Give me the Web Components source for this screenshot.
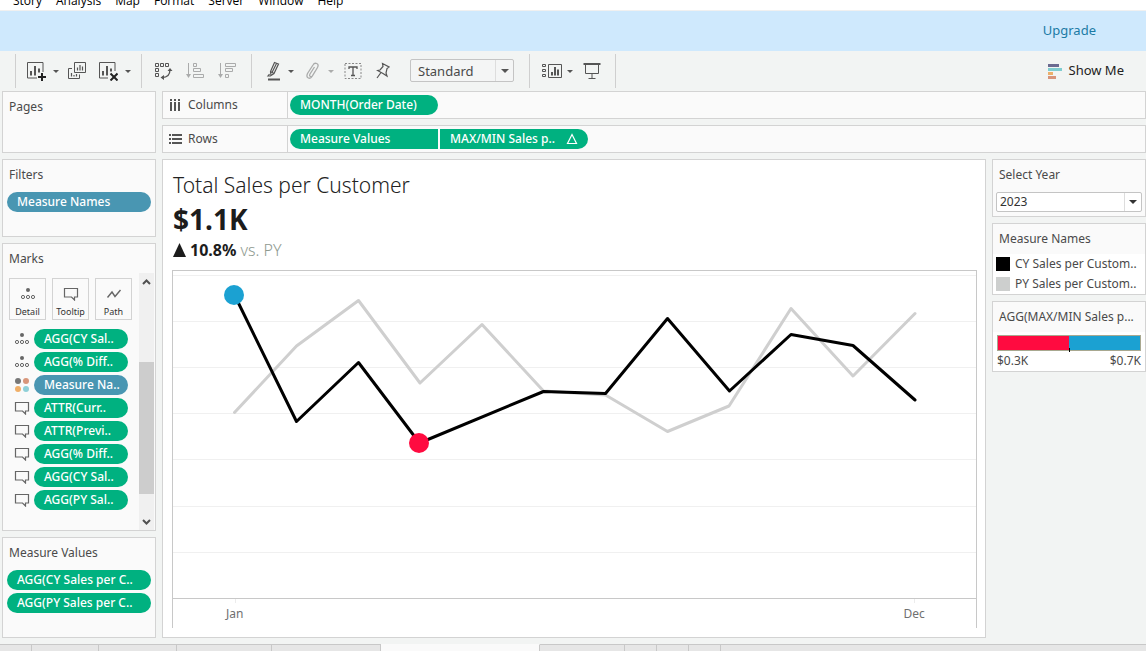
<!DOCTYPE html>
<html lang="en">
<head>
<meta charset="utf-8">
<title>Total Sales per Customer</title>
<style>
html,body{margin:0;height:100%}
body{font-family:"Noto Sans","Open Sans",sans-serif;font-size:12px;line-height:20px;color:#4a4a4a;background:#f2f4f3;overflow:hidden;
--line:#d3d3d3;--panel:#fafafa;--green:#00b180;--blue:#4996b2}
</style>
</head>
<body>
<workbook-app></workbook-app>

<template id="t-app">
<style>
:host{display:flex;flex-direction:column;min-height:100vh}
main{flex:1;display:grid;grid-template-columns:154px minmax(0,1fr);gap:6px;padding:0 0 6px 2px}
aside,.work,.legends{display:flex;flex-direction:column;gap:6px;min-width:0}
.row{flex:1;display:grid;grid-template-columns:minmax(0,1fr) 154px;gap:6px}
.pages{height:62px}.filters{height:78px}.marks{height:288px}.values{flex:1}
.stack{display:grid;gap:3px;padding:0 4px}
</style>
<menu-bar></menu-bar>
<upgrade-banner></upgrade-banner>
<tool-bar></tool-bar>
<main>
<aside>
<side-card class="pages" heading="Pages"></side-card>
<side-card class="filters" heading="Filters"><div class="stack"><field-pill kind="dimension">Measure Names</field-pill></div></side-card>
<side-card class="marks" heading="Marks"><marks-list></marks-list></side-card>
<side-card class="values" heading="Measure Values"><div class="stack"><field-pill>AGG(CY Sales per C..</field-pill><field-pill>AGG(PY Sales per C..</field-pill></div></side-card>
</aside>
<div class="work">
<data-shelf name="Columns" icon="columns"><field-pill size="shelf">MONTH(Order Date)</field-pill></data-shelf>
<data-shelf name="Rows" icon="rows"><field-pill size="shelf" join="right">Measure Values</field-pill><field-pill size="shelf" join="left" calc>MAX/MIN Sales p..</field-pill></data-shelf>
<div class="row">
<chart-view></chart-view>
<div class="legends">
<year-filter></year-filter>
<name-legend></name-legend>
<range-legend></range-legend>
</div>
</div>
</div>
</main>
<sheet-tabs></sheet-tabs>
</template>

<template id="t-menu">
<style>
:host{display:block;height:10px;background:#fff;border-bottom:1px solid #f0f0f0;overflow:hidden}
nav{display:flex;gap:14px;padding-left:13px;height:9px;align-items:flex-end}
button{all:unset;font:12px/16px "Open Sans","Noto Sans",sans-serif;color:#000;white-space:nowrap}
</style>
<nav><button>Story</button><button>Analysis</button><button>Map</button><button>Format</button><button>Server</button><button>Window</button><button>Help</button></nav>
</template>

<template id="t-banner">
<style>
:host{display:flex;height:40px;background:#cfe9fd;align-items:flex-start;justify-content:flex-end;padding-right:50px;padding-top:9px;box-sizing:border-box}
a{font-size:13px;color:#1b7ba5;text-decoration:none}
</style>
<a href="#upgrade">Upgrade</a>
</template>

<template id="t-tools">
<style>
:host{display:flex;height:40px;align-items:center;padding-left:15px;padding-right:22px}
.g{display:flex;align-items:center;height:34px;border-left:1px solid #cfcfcf;box-sizing:border-box}
.g1{width:126px;padding-left:10px}.g2{width:110px;padding-left:11px}.g3{width:278px;padding-left:11px}.g4{width:86px;padding-left:11px}.g5{flex:1;justify-content:flex-end}
button{all:unset;display:flex;align-items:center}
svg{display:block;fill:none;stroke:#555;flex:none}
.dim{opacity:.45}
.arrow{width:0;height:0;border:3px solid transparent;border-top-color:#555;border-bottom:0}
.g1 .arrow{margin:0 9px 0 7px}
.g1 .arrow.last{margin-left:7px}
.g1 .clear{margin-left:12px}
.g2{gap:12px}
.g3 .arrow{margin:0 10px 0 6px}
.g3 .mark{margin-left:3px}
.g3 .arrow.dim{margin-left:8px}
.g3 .pin{margin-left:14px}
.g4 .arrow{margin:0 10px 0 4px}
.sel{position:relative;margin-left:20px;width:104px;height:23px;margin-top:-1px}
select{appearance:none;width:100%;height:100%;box-sizing:border-box;border:1px solid #c4c4c4;border-radius:2px;background:#f4f5f5;font:13px/20px "Noto Sans",sans-serif;color:#4a4a4a;padding:0 20px 0 7px}
.sel::before{content:"";position:absolute;right:18px;top:1px;bottom:1px;border-left:1px solid #ddd}
.sel::after{content:"";position:absolute;right:5px;top:10px;border:4px solid transparent;border-top-color:#555;border-bottom:0}
.show{font-size:13px;line-height:18px;color:#222;gap:6px}
.show svg{margin-top:1px}
.show span{margin-top:-2px}
</style>
<div class="g g1">
<button aria-label="New worksheet"><svg width="20" height="20" viewBox="0 0 20 20"><path d="M11 17H1.500V1.500H17V11"/><path d="M5 10v4.500M9 5v9.500M13 7.500v4" stroke-width="2"/><path d="M16 12v8M12 16h8" stroke="#222" stroke-width="2"/></svg></button><span class="arrow"></span>
<button aria-label="Duplicate"><svg width="18" height="18" viewBox="0 0 18 18"><path d="M6.500 .5h11v10h-11zM4 6.500H.5v10h11v-4"/><path d="M9.500 5.500v3M12 3v5.500M14.500 4.500v4M3.500 11v3.500M6 13v1.500M8.500 12v2.500" stroke-width="1.200"/></svg></button>
<button class="clear" aria-label="Clear sheet"><svg width="20" height="20" viewBox="0 0 20 20"><path d="M10 17H1.500V1.500H17V10"/><path d="M5 10v4.500M9 5v9.500M13 7.500v3" stroke-width="2"/><path d="M12.500 12.500l7 7M19.500 12.500l-7 7" stroke="#222" stroke-width="2"/></svg></button><span class="arrow last"></span>
</div>
<div class="g g2">
<button aria-label="Swap rows and columns"><svg width="20" height="20" viewBox="0 0 20 20"><path d="M2.500 2.500h3v3h-3zM7.500 2.500h3v3h-3zM12.500 2.500h3v3h-3zM2.500 7.500h3v3h-3zM2.500 12.500h3v3h-3z"/><path d="M17 8.500q0 8-8 8" stroke-width="1.300"/><path d="M14.500 10L17 7l2.500 3zM11 14l-3.500 2.500L11 19z" fill="#555" stroke="none"/></svg></button>
<button class="dim" aria-label="Sort ascending"><svg width="20" height="18" viewBox="0 0 20 18"><path d="M3.500 1v13M8.500 1.500h3v3h-3zM8.500 6.500h7v3h-7zM8.500 12.500h10v3h-10z"/><path d="M1 12h5l-2.500 4z" fill="#555" stroke="none"/></svg></button>
<button class="dim" aria-label="Sort descending"><svg width="20" height="18" viewBox="0 0 20 18"><path d="M3.500 1v13M8.500 1.500h10v3h-10zM8.500 6.500h7v3h-7zM8.500 12.500h3v3h-3z"/><path d="M1 12h5l-2.500 4z" fill="#555" stroke="none"/></svg></button>
</div>
<div class="g g3">
<button class="mark" aria-label="Highlight"><svg width="16" height="20" viewBox="0 0 16 20"><path d="M8.500 1.500l4 1.500L8 12.500 5 14.500l-.5-4zM4.500 10.500l3.500 2M10.500 2.500L6 11.500M3.500 13l-1.500 2h2.500" stroke-width="1.200"/><path d="M2 18.500h12" stroke-width="2"/></svg></button><span class="arrow"></span>
<button class="dim" aria-label="Group"><svg width="16" height="18" viewBox="0 0 16 18"><path d="M10.500 5L6 12q-1 2 .5 2.500T9 13l4.500-7.500q1.500-3-.8-4T9 3L3.500 11.500q-1.500 3.500.8 4.500T8 14.500l3-5" stroke-width="1.300"/></svg></button><span class="arrow dim"></span>
<button aria-label="Labels"><svg width="18" height="18" viewBox="0 0 18 18"><rect x="1" y="1.500" width="16" height="15" stroke-dasharray="2 1.500" stroke="#888"/><path d="M5 7V5h8v2M9 5v8.500M7 13.500h4" stroke-width="1.300"/></svg></button>
<button class="pin" aria-label="Pin"><svg width="14" height="18" viewBox="0 0 14 18"><path d="M6.500 1.500l6.500 3.500-2 1.500-1 4.500 1 3-4-2.500-5.500-3 2.500-.500 3-3.500zM5 10.500L1 16" stroke-width="1.200"/></svg></button>
<div class="sel"><select aria-label="Fit"><option>Standard</option></select></div>
</div>
<div class="g g4">
<button aria-label="Show cards"><svg width="22" height="18" viewBox="0 0 22 18"><path d="M1.500 2.500h3v2h-3zM1.500 7.500h3v2h-3zM1.500 12.500h3v2h-3zM7.500 2.500h13v13h-13z"/><path d="M11 10v3.500M14 5v8.500M17 7.500v6" stroke-width="2"/></svg></button><span class="arrow"></span>
<button aria-label="Presentation mode"><svg width="18" height="18" viewBox="0 0 18 18"><path d="M.5 2h17" stroke-width="2"/><path d="M2.500 3v8.500h13V3M9 11.500v5M5.500 16.500h7"/></svg></button>
</div>
<div class="g g5"><button class="show"><svg width="15" height="15" viewBox="0 0 15 15"><g stroke="none"><path d="M0 0h11v3H0z" fill="#6b6a90"/><path d="M0 4h14v3H0z" fill="#80cdd0"/><path d="M0 8h5v3H0z" fill="#ecaf6b"/><path d="M0 12h8v3H0z" fill="#d8947a"/></g></svg><span>Show Me</span></button></div>
</template>

<template id="t-card">
<style>
:host{display:block;box-sizing:border-box;border:1px solid var(--line);background:var(--panel)}
h2{font:12px/20px "Noto Sans",sans-serif;margin:0;padding:5px 6px 7px}
</style>
<h2></h2><slot></slot>
</template>

<template id="t-pill">
<style>
:host{display:flex;align-items:center;justify-content:space-between;box-sizing:border-box;height:20px;border-radius:10px;padding:0 10px;background:var(--green);color:#fff;white-space:nowrap;overflow:hidden;font-weight:500}
:host([kind=dimension]){background:var(--blue)}
:host([size=shelf]){width:148px}
:host([join=right]){border-radius:10px 0 0 10px}
:host([join=left]){border-radius:0 10px 10px 0}
svg{display:none}
:host([calc]) svg{display:block}
</style>
<span><slot></slot></span><svg width="12" height="12" viewBox="0 0 12 12" fill="none" stroke="#fff" stroke-width="1.200"><path d="M6 1.500l4.500 9h-9z"/></svg>
</template>

<template id="t-marks">
<style>
:host{display:grid;grid-template-columns:1fr 15px;height:257px;margin:-3px 1px 0 0}
.cards{display:grid;grid-template-columns:repeat(3,37px);gap:6px;padding:5px 6px 9px}
button{all:unset;box-sizing:border-box;height:42px;border:1px solid var(--line);display:flex;flex-direction:column;align-items:center;justify-content:space-between;padding-top:8px;font-size:9px;line-height:15px;color:#333}
ul{list-style:none;margin:0;padding:0 0 0 12px;display:grid;gap:3px}
li{display:grid;grid-template-columns:16px 94px;gap:4px;align-items:center;margin-left:-1px}
li field-pill{margin-left:1px;width:94px;margin-left:0}
.bar{background:#f0f0f0;display:flex;flex-direction:column;align-items:center}
.bar svg{margin:6px 0 7px}
.thumb{margin-top:70px;height:132px;width:15px;background:#cdcdcd}
.bar svg:last-child{margin-top:auto;margin-bottom:5px}
</style>
<div><div class="cards"><button><mark-icon type="detail"></mark-icon>Detail</button><button><mark-icon type="tip"></mark-icon>Tooltip</button><button><mark-icon type="path"></mark-icon>Path</button></div>
<ul>
<li><mark-icon type="detail"></mark-icon><field-pill>AGG(CY Sal..</field-pill></li>
<li><mark-icon type="detail"></mark-icon><field-pill>AGG(% Diff..</field-pill></li>
<li><mark-icon type="color"></mark-icon><field-pill kind="dimension">Measure Na..</field-pill></li>
<li><mark-icon type="tip"></mark-icon><field-pill>ATTR(Curr..</field-pill></li>
<li><mark-icon type="tip"></mark-icon><field-pill>ATTR(Previ..</field-pill></li>
<li><mark-icon type="tip"></mark-icon><field-pill>AGG(% Diff..</field-pill></li>
<li><mark-icon type="tip"></mark-icon><field-pill>AGG(CY Sal..</field-pill></li>
<li><mark-icon type="tip"></mark-icon><field-pill>AGG(PY Sal..</field-pill></li>
</ul></div>
<div class="bar"><svg width="9" height="6" viewBox="0 0 9 6" fill="none" stroke="#505050" stroke-width="2"><path d="M1 5l3.500-3.500L8 5"/></svg><div class="thumb"></div><svg width="9" height="6" viewBox="0 0 9 6" fill="none" stroke="#505050" stroke-width="2"><path d="M1 1l3.500 3.500L8 1"/></svg></div>
</template>

<template id="t-icon"><style>:host{display:block}svg{display:block;fill:none;stroke:#666}</style></template>

<template id="t-shelf">
<style>
:host{display:flex;box-sizing:border-box;height:28px;border:1px solid var(--line);background:var(--panel);align-items:stretch}
.name{border-right:1px solid var(--line);display:flex;align-items:center;gap:6px;padding-left:6px;box-sizing:border-box;width:125px}
.pills{display:flex;gap:2px;align-items:center;padding-left:2px}
</style>
<div class="name"><svg width="13" height="13" viewBox="0 0 13 13" fill="none" stroke="#555"></svg><span></span></div><div class="pills"><slot></slot></div>
</template>

<template id="t-chart">
<style>
:host{display:flex;flex-direction:column;box-sizing:border-box;border:1px solid var(--line);background:#fff;padding:10px 8px 9px 9px}
h1{margin:0;padding-left:1px;font:300 21px/30px "Noto Sans",sans-serif;color:#222}
.big{padding-left:1px;font-size:28px;line-height:38px;font-weight:700;color:#1c1c1c}
.delta{padding-left:1px;display:flex;align-items:center;gap:4px;font-size:16px;line-height:24px;height:32px;box-sizing:border-box;padding-bottom:8px;color:#8f9a90;font-weight:300}
b{color:#1c1c1c;font-weight:700}
.frame{flex:1;display:flex;flex-direction:column;border:1px solid #c8c8c8;border-bottom:0}
.plot{flex:1;position:relative}
.plot svg{position:absolute;inset:0;width:100%;height:100%}
.dot{position:absolute;width:20px;height:20px;border-radius:50%;transform:translate(-50%,-50%)}
.axis{display:grid;grid-template-columns:repeat(12,1fr);padding:0 calc(100%/26);height:29px;border-top:1px solid #c8c8c8;align-items:center;text-align:center;color:#707070}
.axis span{position:relative}
.axis span::before{content:"";position:absolute;left:50%;top:-5px;height:4px;border-left:1px solid #ececec}
.axis span:last-child{grid-column:12}
</style>
<h1>Total Sales per Customer</h1>
<div class="big">$1.1K</div>
<div class="delta"><svg width="13" height="14" viewBox="0 0 13 14"><path d="M6.500 0L13 14H0z" fill="#1c1c1c"/></svg><span><b>10.8%</b> vs. PY</span></div>
<div class="frame"><div class="plot"><svg viewBox="173 271 803 327" preserveAspectRatio="none" fill="none" stroke-linejoin="round" stroke-linecap="round">
<path stroke="#f0f0f0" stroke-linecap="butt" d="M173 275.500h803M173 321.500h803M173 367.500h803M173 413.500h803M173 459.500h803M173 506.500h803M173 552.500h803"/>
<path stroke="#cfcfcf" stroke-width="3" d="M234.500 412.500L296.500 346L358.500 300.500L420 383L482 324.500L543.500 391L605.500 395L667.500 431.500L729 406L791 308.500L853 376L915 313.500"/>
<path stroke="#000" stroke-width="3" d="M234.500 295L296.500 421.500L358.500 362.500L419.500 443L543.500 391.500L605.500 393.500L667.500 318.500L729.500 391L791 334.500L853 345.500L915 400"/>
</svg><span class="dot" style="left:7.600%;top:7.340%;background:#1ba1d2"></span><span class="dot" style="left:30.640%;top:52.600%;background:#ff0b40"></span></div>
<div class="axis"><span>Jan</span><span>Dec</span></div></div>
</template>

<template id="t-year">
<style>
side-card{height:58px}
.sel{position:relative;margin:0 3px;height:20px}
select{appearance:none;width:100%;height:100%;border:1px solid #c4c4c4;border-radius:2px;background:#fff;font:12px/18px "Noto Sans",sans-serif;color:#333;padding:0 20px 0 3px;box-sizing:border-box}
.sel::before{content:"";position:absolute;right:17px;top:1px;bottom:1px;border-left:1px solid #ddd}
.sel::after{content:"";position:absolute;right:5px;top:8px;border:4px solid transparent;border-top-color:#333;border-bottom:0}
</style>
<side-card heading="Select Year"><div class="sel"><select aria-label="Select Year"><option>2023</option></select></div></side-card>
</template>

<template id="t-names">
<style>
side-card{height:72px}
ul{list-style:none;margin:-2px 0 0;padding:0 0 0 3px;background:#fff}
li{display:flex;align-items:center;gap:5px;height:20px;white-space:nowrap}
i{width:14px;height:14px;background:#000}
li+li i{background:#cdcfce}
</style>
<side-card heading="Measure Names"><ul><li><i></i>CY Sales per Custom..</li><li><i></i>PY Sales per Custom..</li></ul></side-card>
</template>

<template id="t-range">
<style>
side-card{height:71px;white-space:nowrap}
.body{background:#fff;padding:3px 4px 0;margin-top:-2px;height:39px;box-sizing:border-box}
.ramp{display:flex;height:14px;border:1px solid #a8a890;position:relative}
.ramp span{flex:1;background:#ff0b40}
.ramp span+span{background:#1ba1d2}
.ramp::after{content:"";position:absolute;left:50%;bottom:-2px;height:4px;border-left:1px solid #000}
.lab{display:flex;justify-content:space-between;line-height:20px}
</style>
<side-card heading="AGG(MAX/MIN Sales p..."><div class="body"><div class="ramp"><span></span><span></span></div><div class="lab"><span>$0.3K</span><span>$0.7K</span></div></div></side-card>
</template>

<template id="t-tabs">
<style>
:host{display:flex;height:7px;background:#e6e6e6}
button{all:unset;box-sizing:border-box;border:1px solid #c8c8c8;border-width:1px 1px 0 0}
button.on{background:#fafafa;border-top-color:#fafafa}
.rest{flex:1;border-top:1px solid #c8c8c8}
</style>
</template>

<script>
class Base extends HTMLElement{
  constructor(){super();this.attachShadow({mode:'open'}).append(document.getElementById(this.constructor.tpl).content.cloneNode(true));}
}
const define=(name,tpl,C=class extends Base{})=>{C.tpl=tpl;customElements.define(name,C);};
define('menu-bar','t-menu');
define('upgrade-banner','t-banner');
define('tool-bar','t-tools');
define('side-card','t-card',class extends Base{
  connectedCallback(){this.shadowRoot.querySelector('h2').textContent=this.getAttribute('heading');}
});
define('field-pill','t-pill');
const ICONS={
  detail:'<circle cx="8" cy="3" r="2" fill="#666" stroke="none"/><circle cx="3" cy="10" r="1.600"/><circle cx="8" cy="10" r="1.600"/><circle cx="13" cy="10" r="1.600"/>',
  tip:'<path d="M1.500 1.500h13v8.500h-3v3l-3-3h-7z" stroke-width="1.200"/>',
  path:'<path d="M1.500 10.500L6 5l3 4.500 5.500-6.500" stroke-width="1.400"/>',
  color:'<g stroke="none"><circle cx="4" cy="3" r="3" fill="#777"/><circle cx="12" cy="3" r="3" fill="#d8967a"/><circle cx="4" cy="11" r="3" fill="#f0af68"/><circle cx="12" cy="11" r="3" fill="#8ed0d8"/></g>'
};
define('mark-icon','t-icon',class extends Base{
  connectedCallback(){this.shadowRoot.innerHTML+=`<svg width="16" height="14" viewBox="0 0 16 14">${ICONS[this.getAttribute('type')]}</svg>`;}
});
define('marks-list','t-marks');
define('data-shelf','t-shelf',class extends Base{
  connectedCallback(){
    const r=this.shadowRoot,cols=this.getAttribute('icon')==='columns';
    r.querySelector('.name span').textContent=this.getAttribute('name');
    r.querySelector('svg').innerHTML=cols
      ?'<path d="M2 0v2M6 0v2M10 0v2M2 3v9M6 3v9M10 3v9" stroke-width="2"/>'
      :'<path d="M0 2h2M0 6h2M0 10h2M3 2h10M3 6h10M3 10h10" stroke-width="2"/>';
  }
});
define('chart-view','t-chart');
define('year-filter','t-year');
define('name-legend','t-names');
define('range-legend','t-range');
define('sheet-tabs','t-tabs',class extends Base{
  connectedCallback(){
    [32,67,78,95,109,159,85,32,32,32].forEach((w,i)=>{
      const b=document.createElement('button');
      b.style.width=w+'px';
      b.setAttribute('aria-label','Sheet '+(i+1));
      if(i===5)b.className='on';
      this.shadowRoot.append(b);
    });
    const d=document.createElement('div');d.className='rest';this.shadowRoot.append(d);
  }
});
define('workbook-app','t-app');
</script>
</body>
</html>
